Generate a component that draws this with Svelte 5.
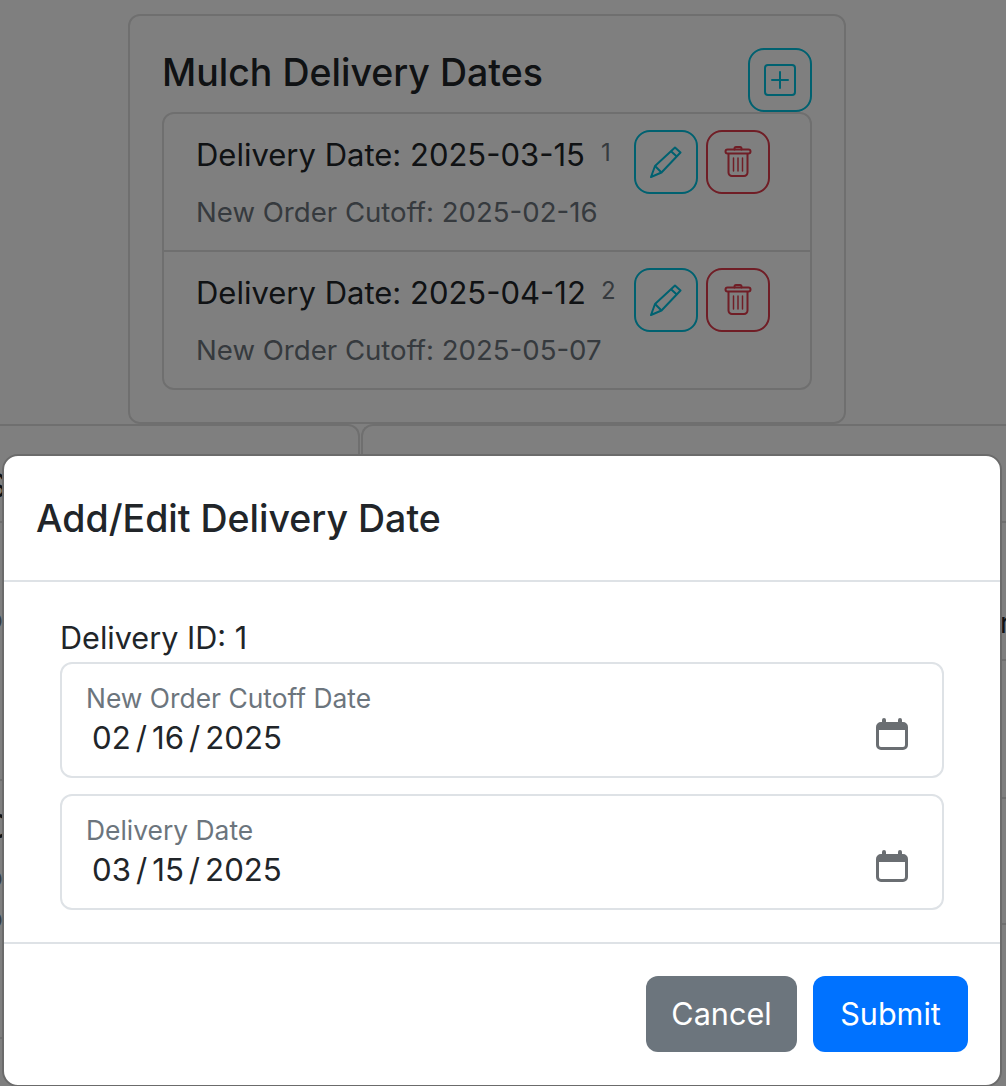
<script>
  const dates = [
    { id: 1, delivery: '2025-03-15', cutoff: '2025-02-16' },
    { id: 2, delivery: '2025-04-12', cutoff: '2025-05-07' }
  ];
  const fields = [
    { label: 'New Order Cutoff Date', mm: '02', dd: '16', yyyy: '2025' },
    { label: 'Delivery Date', mm: '03', dd: '15', yyyy: '2025' }
  ];
</script>

<div class="page">
  <div class="card main">
    <div class="head">
      <h2>Mulch Delivery Dates</h2>
      <button class="icon teal" aria-label="Add">
        <svg width="32" height="32" viewBox="0 0 32 32" fill="none" stroke="currentColor" stroke-width="2" stroke-linecap="round">
          <rect x="1" y="1" width="30" height="30" rx="3" />
          <path d="M16 8v16M8 16h16" />
        </svg>
      </button>
    </div>
    <ul class="list">
      {#each dates as d}
        <li>
          <div class="row">
            <span class="title">Delivery Date: {d.delivery}</span>
            <span class="num">{d.id}</span>
            <button class="icon teal" aria-label="Edit">
              <svg width="32" height="32" viewBox="0 0 32 32" fill="none" stroke="currentColor" stroke-width="2" stroke-linejoin="round">
                <path d="M1 31 5 20 25 1.500 30.500 6.500 11.500 26.500Z" />
                <path d="M21 5.200 26.800 10.600M5 20 11.500 26.500" />
              </svg>
            </button>
            <button class="icon red" aria-label="Delete">
              <svg width="32" height="32" viewBox="0 0 32 32" fill="none" stroke="currentColor" stroke-width="2" stroke-linecap="round" stroke-linejoin="round">
                <path d="M12.500 3.500V2.500A1.500 1.500 0 0 1 14 1h4a1.500 1.500 0 0 1 1.500 1.500v1" />
                <rect x="3.500" y="3.500" width="25" height="4" rx="2" />
                <path d="M6.500 8v18.500a3.500 3.500 0 0 0 3.500 3.500h12a3.500 3.500 0 0 0 3.500-3.500V8" />
                <path d="M11.500 12v13M16 12v13M20.500 12v13" stroke-width="1.500" />
              </svg>
            </button>
          </div>
          <div class="cutoff">New Order Cutoff: {d.cutoff}</div>
        </li>
      {/each}
    </ul>
  </div>

  <div class="lower">
    <div class="card side left">
      <div class="peek r1"><span>S</span></div>
      <div class="peek r2"><span class="sub">o</span></div>
      <div class="peek r3">
        <span class="strong">C</span>
        <span class="sub">o</span>
        <span class="sub">o</span>
      </div>
      <div class="peek"></div>
    </div>
    <div class="card side right">
      <div class="peek q1"></div>
      <div class="peek q2"><span class="tail">r</span></div>
      <div class="peek q3"></div>
      <div class="peek q4"></div>
      <div class="peek"></div>
    </div>
  </div>

  <div class="backdrop"></div>

  <div class="modal">
    <div class="modal-head">
      <h5>Add/Edit Delivery Date</h5>
    </div>
    <div class="modal-body">
      <div class="delivery-id">Delivery ID: 1</div>
      {#each fields as f}
        <div class="floating">
          <div class="text">
            <label for={f.label}>{f.label}</label>
            <div class="value" id={f.label}>
              <span>{f.mm}</span><i>/</i><span>{f.dd}</span><i>/</i><span>{f.yyyy}</span>
            </div>
          </div>
          <svg class="cal" width="32" height="32" viewBox="0 0 32 32" fill="#6a6e72">
            <path fill-rule="evenodd" d="M8 0a2 2 0 0 1 2 2v2h12V2a2 2 0 0 1 4 0v2h1a5 5 0 0 1 5 5v18a5 5 0 0 1-5 5H5a5 5 0 0 1-5-5V9a5 5 0 0 1 5-5h1V2a2 2 0 0 1 2-2zM3 12v15a2 2 0 0 0 2 2h22a2 2 0 0 0 2-2V12z"/>
          </svg>
        </div>
      {/each}
    </div>
    <div class="modal-foot">
      <button class="btn grey">Cancel</button>
      <button class="btn blue">Submit</button>
    </div>
  </div>
</div>

<style>
  :global(body) {
    margin: 0;
    background: #fff;
  }

  .page {
    position: relative;
    height: 1086px;
    overflow: hidden;
    box-sizing: border-box;
    padding-top: 14px;
    font-family: Inter, "Liberation Sans", sans-serif;
    color: #212529;
  }

  .card {
    box-sizing: border-box;
    border: 2px solid #dfdfdf;
    border-radius: 12px;
    background: #fff;
  }

  .main {
    width: 718px;
    height: 410px;
    margin-left: 128px;
    padding: 32px;
  }

  .head {
    display: flex;
    justify-content: space-between;
    align-items: flex-start;
    height: 64px;
  }

  h2 {
    margin: 0;
    font-size: 37.5px;
    font-weight: 500;
    line-height: 50px;
  }

  .icon {
    box-sizing: border-box;
    width: 64px;
    height: 64px;
    padding: 0;
    display: flex;
    align-items: center;
    justify-content: center;
    background: none;
    border: 2px solid;
    border-radius: 16px;
    flex: none;
  }

  .teal {
    color: #00c2e0;
  }

  .red {
    color: #e03c4c;
    margin-left: 8px;
  }

  .list {
    list-style: none;
    margin: 0;
    padding: 0;
    border: 2px solid #dfdfdf;
    border-radius: 12px;
    width: 650px;
    box-sizing: border-box;
  }

  li {
    box-sizing: border-box;
    height: 136px;
    padding: 16px 32px 0;
  }

  li + li {
    height: 138px;
    border-top: 2px solid #dfdfdf;
  }

  .row {
    display: flex;
    align-items: flex-start;
  }

  .title {
    font-size: 31px;
    line-height: 50px;
    width: 405px;
    white-space: nowrap;
  }

  .num {
    font-size: 24px;
    line-height: 46px;
    color: #6c757d;
    width: 33px;
  }

  .cutoff {
    font-size: 27.6px;
    line-height: 36px;
    color: #6c757d;
    margin-top: 0;
    white-space: nowrap;
  }

  .lower {
    display: flex;
    gap: 1px;
  }

  .side {
    height: 800px;
    flex: none;
    border-left: none;
    border-radius: 0 12px 0 0;
  }

  .left {
    width: 360px;
  }

  .right {
    flex: 1;
    border-left: 2px solid #dfdfdf;
    border-right: none;
    border-radius: 12px 0 0 0;
    min-width: 0;
  }

  .peek {
    box-sizing: border-box;
    border-bottom: 2px solid #dfdfdf;
    overflow: hidden;
    white-space: nowrap;
  }

  .peek:last-child {
    border-bottom: none;
  }

  .peek span {
    display: block;
    margin-left: -14px;
  }

  .r1 {
    height: 97px;
    padding-top: 40px;
    font-size: 32px;
    line-height: 40px;
  }

  .r2 {
    height: 258px;
    padding-top: 80px;
  }

  .r3 {
    height: 258px;
    padding-top: 26px;
  }

  .sub {
    font-size: 28px;
    line-height: 41px;
    color: #6c757d;
  }

  .r2 .sub {
    line-height: 32px;
  }

  .strong {
    font-size: 32px;
    line-height: 40px;
    font-weight: 500;
    margin-bottom: 10px;
  }

  .q1 {
    height: 97px;
  }

  .q2 {
    height: 138px;
    padding-top: 80px;
  }

  .q2 .tail {
    margin-left: 637px;
    font-size: 28px;
    line-height: 40px;
  }

  .q3 {
    height: 138px;
  }

  .q4 {
    height: 126px;
  }

  .backdrop {
    position: absolute;
    inset: 0;
    background: rgba(0, 0, 0, 0.5);
  }

  .modal {
    position: absolute;
    left: 2px;
    top: 454px;
    width: 1000px;
    height: 633px;
    box-sizing: border-box;
    background: #fff;
    border: 2px solid #6b6b6b;
    border-radius: 16px;
    display: flex;
    flex-direction: column;
  }

  .modal-head {
    height: 126px;
    box-sizing: border-box;
    padding: 2px 32px 0;
    border-bottom: 2px solid #dee2e6;
    display: flex;
    align-items: center;
  }

  h5 {
    margin: 0;
    font-size: 37.5px;
    font-weight: 500;
    line-height: 60px;
  }

  .modal-body {
    height: 362px;
    box-sizing: border-box;
    padding: 36px 56px 0;
    border-bottom: 2px solid #dee2e6;
  }

  .delivery-id {
    font-size: 30.6px;
    line-height: 40px;
    margin-bottom: 4px;
  }

  .floating {
    box-sizing: border-box;
    height: 116px;
    border: 2px solid #dee2e6;
    border-radius: 12px;
    padding: 15px 34px 0 24px;
    display: flex;
    justify-content: space-between;
    align-items: flex-start;
    margin-bottom: 16px;
  }

  label {
    display: block;
    font-size: 26.4px;
    line-height: 38px;
    margin-bottom: 1px;
    color: #6c757d;
  }

  .value {
    display: flex;
    gap: 5px;
    font-size: 31.2px;
    line-height: 40px;
    padding-left: 6px;
  }

  .value i {
    font-style: normal;
  }

  .cal {
    margin-top: 39px;
  }

  .modal-foot {
    flex: 1;
    display: flex;
    justify-content: flex-end;
    gap: 16px;
    padding: 32px 32px 0 0;
  }

  .btn {
    box-sizing: border-box;
    height: 76px;
    border: none;
    border-radius: 12px;
    color: #fff;
    font-family: inherit;
    font-size: 30.6px;
    padding: 0 0 2px;
  }

  .grey {
    width: 151px;
    background: #6c757d;
  }

  .blue {
    width: 155px;
    background: #0072ff;
  }
</style>
